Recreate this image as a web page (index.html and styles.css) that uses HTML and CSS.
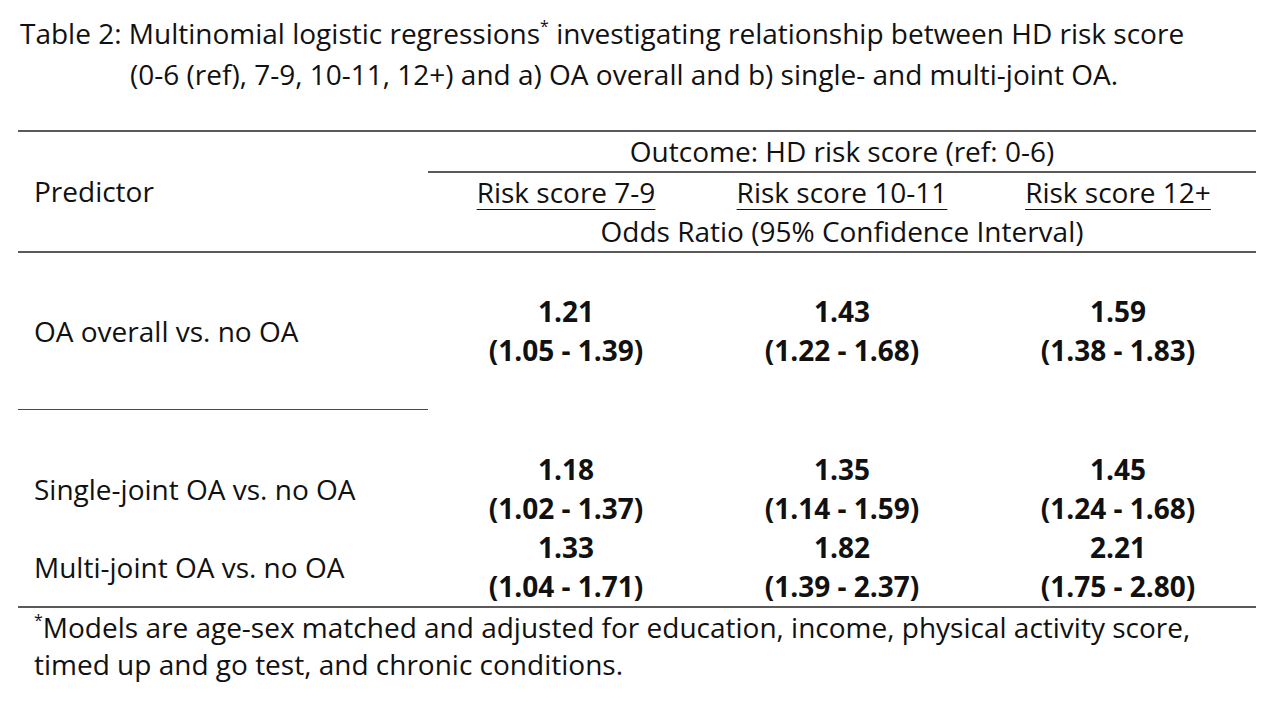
FILE: index.html
```html
<!DOCTYPE html>
<html>
<head>
<meta charset="utf-8">
<link rel="stylesheet" href="styles.css">
</head>
<body>
<div class="page">
  <div class="title">
    <div class="title-line1">Table 2: Multinomial logistic regressions<sup>*</sup> investigating relationship between HD risk score</div>
    <div class="title-line2">(0-6 (ref), 7-9, 10-11, 12+) and a) OA overall and b) single- and multi-joint OA.</div>
  </div>
  <table class="results">
    <tr class="r-outcome">
      <td class="pred" rowspan="3"><span class="pred-label">Predictor</span></td>
      <td class="outcome" colspan="3">Outcome: HD risk score (ref: 0-6)</td>
    </tr>
    <tr class="r-cols">
      <td class="col"><u>Risk score 7-9</u></td>
      <td class="col"><u>Risk score 10-11</u></td>
      <td class="col"><u>Risk score 12+</u></td>
    </tr>
    <tr class="r-or">
      <td class="or" colspan="3">Odds Ratio (95% Confidence Interval)</td>
    </tr>
    <tr class="r-overall">
      <td class="label short-rule">OA overall vs. no OA</td>
      <td class="val">1.21<br>(1.05 - 1.39)</td>
      <td class="val">1.43<br>(1.22 - 1.68)</td>
      <td class="val">1.59<br>(1.38 - 1.83)</td>
    </tr>
    <tr class="r-single">
      <td class="label">Single-joint OA vs. no OA</td>
      <td class="val">1.18<br>(1.02 - 1.37)</td>
      <td class="val">1.35<br>(1.14 - 1.59)</td>
      <td class="val">1.45<br>(1.24 - 1.68)</td>
    </tr>
    <tr class="r-multi">
      <td class="label">Multi-joint OA vs. no OA</td>
      <td class="val">1.33<br>(1.04 - 1.71)</td>
      <td class="val">1.82<br>(1.39 - 2.37)</td>
      <td class="val">2.21<br>(1.75 - 2.80)</td>
    </tr>
  </table>
  <div class="footnote">
    <div><sup>*</sup>Models are age-sex matched and adjusted for education, income, physical activity score,</div>
    <div>timed up and go test, and chronic conditions.</div>
  </div>
</div>
</body>
</html>
```

FILE: styles.css
```css
html, body {
  margin: 0;
  padding: 0;
  background: #ffffff;
}
body {
  width: 1280px;
  height: 720px;
  overflow: hidden;
  font-family: "Open Sans", "Lato", sans-serif;
  color: #111111;
  font-size: 28px;
}
.page {
  padding-top: 13px;
}
.title {
  line-height: 41px;
}
.title-line1 {
  padding-left: 20px;
  white-space: nowrap;
}
.title-line2 {
  padding-left: 130px;
  white-space: nowrap;
}
sup {
  font-size: 16px;
  line-height: 0;
  vertical-align: 0;
  position: relative;
  top: -12px;
}
.results {
  margin-top: 35px;
  margin-left: 18px;
  width: 1238px;
  border-collapse: collapse;
  table-layout: fixed;
  border-top: 2px solid #5a5a5a;
  border-bottom: 2px solid #5a5a5a;
}
.results td {
  padding: 0;
  line-height: 39px;
}
.results td.pred {
  width: 394px;
  vertical-align: middle;
  padding-left: 16px;
}
.results td.col, .results td.val {
  width: 276px;
}
.r-outcome td { height: 38px; }
.r-outcome td.outcome {
  text-align: center;
  border-bottom: 2px solid #5a5a5a;
}
.r-cols td { height: 38px; text-align: center; }
.col u {
  text-decoration-thickness: 1px;
  text-underline-offset: 6px;
}
.r-or td {
  height: 37px;
  text-align: center;
}
.r-or { border-bottom: 2px solid #5a5a5a; }
.results td.label {
  padding-left: 16px;
  vertical-align: middle;
}
.results td.val {
  text-align: center;
  font-weight: 700;
  vertical-align: middle;
}
.r-overall td { height: 156px; }
.r-overall td.short-rule { border-bottom: 1px solid #4a4a4a; }
.r-single td { height: 78px; padding-top: 40px; }
.r-multi td { height: 78px; }
.footnote {
  padding-left: 34px;
  line-height: 37px;
  margin-top: 1px;
}
```
